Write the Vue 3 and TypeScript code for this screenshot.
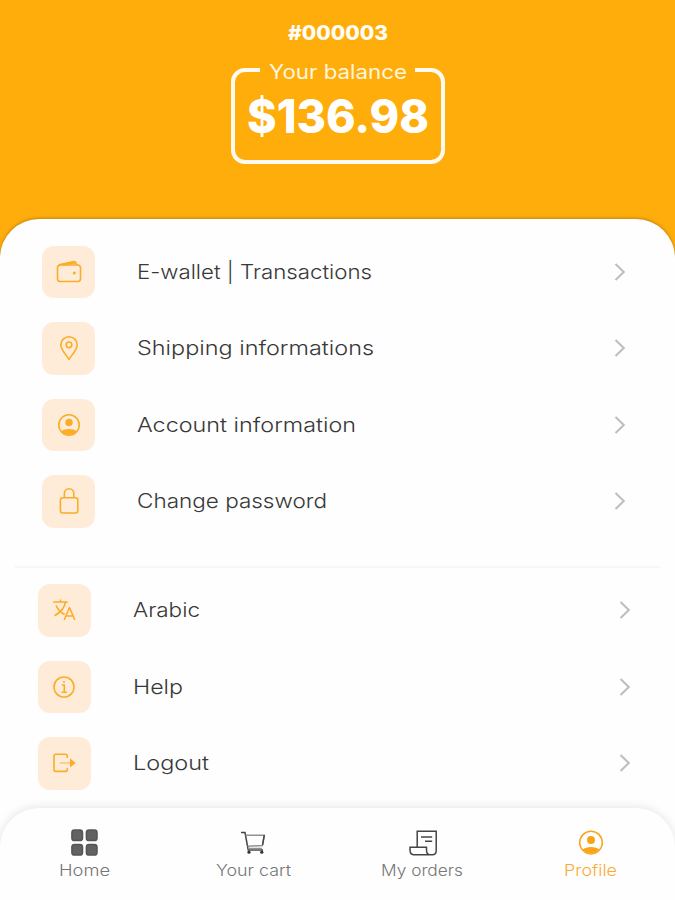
<script setup lang="ts">
interface Entry {
  icon: string
  label: string
  width: number
}

const accountEntries: Entry[] = [
  { icon: 'wallet', label: 'E-wallet | Transactions', width: 235 },
  { icon: 'pin', label: 'Shipping informations', width: 237 },
  { icon: 'user', label: 'Account information', width: 219 },
  { icon: 'lock', label: 'Change password', width: 190 },
]

const appEntries: Entry[] = [
  { icon: 'language', label: 'Arabic', width: 67 },
  { icon: 'info', label: 'Help', width: 50 },
  { icon: 'logout', label: 'Logout', width: 76 },
]

const groups = [
  { name: 'account', entries: accountEntries },
  { name: 'app', entries: appEntries },
]

const tabs: Entry[] = [
  { icon: 'home', label: 'Home', width: 51 },
  { icon: 'cart', label: 'Your cart', width: 75 },
  { icon: 'orders', label: 'My orders', width: 82 },
  { icon: 'profile', label: 'Profile', width: 53 },
]
</script>

<template>
  <main class="screen">
    <header class="header">
      <svg class="user-id" width="102" height="24">
        <text x="1" y="18.3" textLength="100" lengthAdjust="spacingAndGlyphs">#000003</text>
      </svg>
      <section class="balance">
        <svg class="legend" width="155" height="28">
          <text x="9" y="20" textLength="138" lengthAdjust="spacingAndGlyphs">Your balance</text>
        </svg>
        <svg class="amount" width="186" height="62">
          <text x="2" y="47" textLength="182" lengthAdjust="spacingAndGlyphs">$136.98</text>
        </svg>
      </section>
    </header>

    <section class="sheet">
      <ul v-for="group in groups" :key="group.name" class="group" :class="group.name">
        <li v-for="entry in group.entries" :key="entry.label" class="row">
          <span class="tile">
            <svg v-if="entry.icon === 'wallet'" class="icon" width="28" height="28" viewBox="0 0 28 28">
              <rect x="2.5" y="7" width="23" height="16.5" rx="2.8" />
              <path d="M3 8.5 5 6.5 19 3.5Q21 3.2 21.5 7M8 7 20 5" />
              <circle class="solid" cx="19.3" cy="15" r="1.5" />
            </svg>
            <svg v-else-if="entry.icon === 'pin'" class="icon" width="28" height="28" viewBox="0 0 28 28">
              <path d="M14 25.3C11.5 21.5 5.8 15.5 5.8 10.9a8.2 8.2 0 0 1 16.4 0C22.2 15.5 16.5 21.5 14 25.3Z" />
              <circle cx="14" cy="10.8" r="2.8" />
            </svg>
            <svg v-else-if="entry.icon === 'user'" class="icon" width="28" height="28" viewBox="0 0 28 28">
              <circle cx="14" cy="14" r="10.2" />
              <circle class="solid" cx="14" cy="11.4" r="3.7" />
              <path class="solid" d="M6.4 20.3C9 17.2 19 17.2 21.6 20.3A10.2 10.2 0 0 1 6.4 20.3Z" />
            </svg>
            <svg v-else-if="entry.icon === 'lock'" class="icon" width="28" height="28" viewBox="0 0 28 28">
              <rect x="5.4" y="10.8" width="17.4" height="15.2" rx="2.4" />
              <path d="M9.4 10.8V6.5a4.7 4.7 0 0 1 9.4 0V10.8" />
            </svg>
            <svg v-else-if="entry.icon === 'language'" class="icon" width="28" height="28" viewBox="0 0 28 28">
              <path d="M3.2 6H17.8M10.5 3.5V6M15.5 6C14.5 12 9.5 17 4.5 19.7M6 9.2C8 14 11.5 17 14.7 18.5" />
              <path d="M14.2 24 19.5 11.5 24.8 24M16 20H23" />
            </svg>
            <svg v-else-if="entry.icon === 'info'" class="icon" width="28" height="28" viewBox="0 0 28 28">
              <circle cx="14" cy="14" r="10" />
              <path d="M11.8 12H14.3V19M11.5 19.3H17" />
              <circle class="solid" cx="14" cy="8.9" r="1" />
            </svg>
            <svg v-else class="icon" width="28" height="28" viewBox="0 0 28 28">
              <path d="M17.3 9V7.3Q17.3 5.3 15.3 5.3H6Q4 5.3 4 7.3V20.4Q4 22.4 6 22.4H15.3Q17.3 22.4 17.3 20.4V18.7" />
              <path class="faint" d="M9.5 13.9H21" />
              <path class="solid" d="M20 9.3 25.6 13.9 20 18.5Z" />
            </svg>
          </span>
          <svg class="label" width="250" height="30">
            <text x="0" y="22" :textLength="entry.width" lengthAdjust="spacingAndGlyphs">{{ entry.label }}</text>
          </svg>
          <svg class="chevron" width="12" height="20" viewBox="0 0 12 20">
            <path d="M1.5 2 9.8 10 1.5 18" />
          </svg>
        </li>
      </ul>
    </section>

    <nav class="tabbar">
      <a v-for="tab in tabs" :key="tab.label" class="tab" :class="{ active: tab.icon === 'profile' }">
        <svg v-if="tab.icon === 'home'" class="tab-icon grid" width="32" height="32" viewBox="0 0 32 32">
          <rect x="3.9" y="2.9" width="10.6" height="10.6" rx="2.6" />
          <rect x="18.4" y="2.9" width="10.6" height="10.6" rx="2.6" />
          <rect x="3.9" y="17.4" width="10.6" height="10.6" rx="2.6" />
          <rect x="18.4" y="17.4" width="10.6" height="10.6" rx="2.6" />
        </svg>
        <svg v-else-if="tab.icon === 'cart'" class="tab-icon" width="32" height="32" viewBox="0 0 32 32">
          <path d="M4 5.5H8L11.2 23H26" />
          <path class="grey" d="M8.6 8.2H27.3L25.4 18.5 10.5 19.2" />
          <path class="grey" d="M11 21.5H25" />
          <path d="M27.3 8.2 25.6 17.8" />
          <circle class="dot" cx="12" cy="25.2" r="1.6" />
          <circle class="dot" cx="24.8" cy="25.2" r="1.6" />
        </svg>
        <svg v-else-if="tab.icon === 'orders'" class="tab-icon" width="32" height="32" viewBox="0 0 32 32">
          <path d="M11.2 20.2V4.2H30.2V23.7Q30.2 27.7 26.2 27.7H7.5Q4 27.2 4 23.2V20.2H20.5V23.2Q20.8 27.7 24 27.7" />
          <path d="M15 10H26.2M19 14.3H26.2" />
        </svg>
        <svg v-else class="tab-icon" width="32" height="32" viewBox="0 0 32 32">
          <circle cx="16" cy="15.6" r="11.3" />
          <circle class="dot" cx="16" cy="13.1" r="4" />
          <path class="dot" d="M7.8 22.6C10.5 19 21.5 19 24.2 22.6A11.2 11.2 0 0 1 7.8 22.6Z" />
        </svg>
        <svg class="tab-label" :width="tab.width" height="20">
          <text x="0" y="15" :textLength="tab.width" lengthAdjust="spacingAndGlyphs">{{ tab.label }}</text>
        </svg>
      </a>
    </nav>
  </main>
</template>

<style>
body {
  margin: 0;
}
</style>

<style scoped>
.screen {
  display: flex;
  flex-direction: column;
  width: 675px;
  height: 900px;
  overflow: hidden;
  background: #ffad0b;
  font-family: Inter, "Liberation Sans", sans-serif;
}
svg {
  display: block;
  flex: none;
  overflow: visible;
}
.header {
  display: flex;
  flex-direction: column;
  align-items: center;
  height: 219px;
  flex: none;
  box-sizing: border-box;
  padding-top: 22px;
}
.user-id text {
  fill: #fffdf8;
  font-size: 20px;
  font-weight: 800;
}
.balance {
  display: flex;
  flex-direction: column;
  align-items: center;
  box-sizing: border-box;
  width: 214px;
  height: 96px;
  margin-top: 21.5px;
  border: 4px solid #fffaf0;
  border-radius: 14px;
}
.legend {
  margin-top: -13px;
  background: #ffad0b;
}
.legend text {
  fill: #fff5df;
  font-size: 19.5px;
  font-weight: 400;
}
.amount {
  margin-top: -1px;
}
.amount text {
  fill: #fff;
  font-size: 46px;
  font-weight: 800;
}
.sheet {
  flex: none;
  box-sizing: border-box;
  height: 629px;
  margin-bottom: -40px;
  padding-top: 14.5px;
  background: #fefefe;
  border-radius: 39px 39px 0 0;
  box-shadow: 0 -1px 3px rgba(100, 70, 10, 0.4);
}
.group {
  margin: 0;
  list-style: none;
}
.account {
  height: 332.5px;
  padding: 0 44.5px 0 42.4px;
}
.app {
  margin: 0 15px;
  padding: 4px 24.5px 0 22.5px;
  border-top: 2px solid #f6f6f6;
}
.row {
  display: flex;
  align-items: center;
  height: 76.5px;
}
.tile {
  display: flex;
  align-items: center;
  justify-content: center;
  width: 53px;
  height: 52.5px;
  border-radius: 12px;
  background: #ffecd8;
}
.icon {
  margin-left: -0.5px;
  fill: none;
  stroke: #fbac28;
  stroke-width: 1.6;
  stroke-linejoin: round;
}
.icon .solid {
  fill: #fbac28;
  stroke: none;
}
.icon .faint {
  stroke: #fcc978;
}
.label {
  margin-left: 42px;
}
.label text {
  fill: #383838;
  font-size: 20.2px;
  font-weight: 300;
}
.chevron {
  margin-left: auto;
  margin-right: 5px;
  fill: none;
  stroke: #bdbdbd;
  stroke-width: 2;
}
.tabbar {
  position: relative;
  display: grid;
  grid-template-columns: repeat(4, 1fr);
  flex: none;
  height: 92px;
  background: #fefefe;
  border-radius: 39px 39px 0 0;
  box-shadow: 0 -1px 10px rgba(0, 0, 0, 0.1);
}
.tab {
  display: flex;
  flex-direction: column;
  align-items: center;
  padding-top: 18.5px;
}
.tab-icon {
  fill: none;
  stroke: #454545;
  stroke-width: 1.5;
}
.tab-icon.grid {
  fill: #626262;
  stroke: #555;
}
.tab-icon .grey {
  stroke: #929292;
}
.tab-icon .dot {
  fill: #333;
  stroke: none;
}
.tab-label {
  margin-top: 2px;
}
.tab-label text {
  fill: #777;
  font-size: 15.3px;
  font-weight: 300;
}
.active .tab-icon {
  stroke: #f9a51a;
}
.active .tab-icon .dot {
  fill: #f9a51a;
}
.active .tab-label text {
  fill: #fbab35;
}
</style>
